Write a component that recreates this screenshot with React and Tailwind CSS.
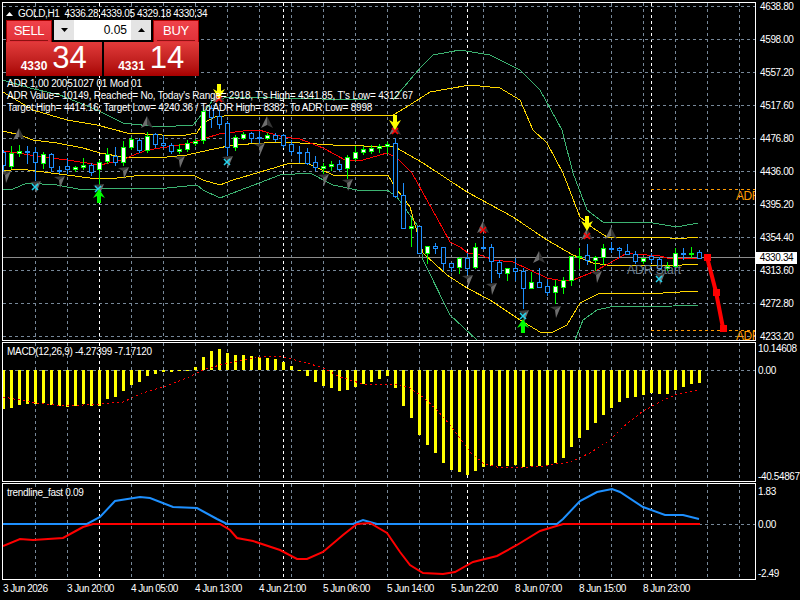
const candles = [
  [150, 152, 165, 170, 0], [146, 153, 166, 168, 1], [145, 151, 153, 156, 1], [146, 151, 152, 163, 0],
  [147, 152, 162, 180, 0], [152, 154, 163, 168, 1], [153, 154, 167, 171, 0], [166, 170, 171, 173, 0],
  [158, 166, 169, 173, 0], [166, 167, 169, 171, 1], [158, 165, 167, 169, 1], [163, 165, 172, 175, 0],
  [160, 162, 169, 185, 1], [148, 154, 161, 163, 1], [147, 156, 162, 165, 0], [141, 147, 162, 165, 1],
  [137, 139, 147, 149, 1], [138, 140, 150, 152, 0], [132, 136, 150, 152, 1], [133, 134, 144, 147, 0],
  [135, 143, 145, 147, 0], [143, 145, 151, 153, 0], [144, 149, 151, 153, 1], [140, 143, 149, 151, 1],
  [139, 141, 143, 145, 1], [108, 111, 140, 143, 1], [105, 108, 117, 127, 0], [110, 116, 124, 128, 0],
  [121, 123, 147, 155, 0], [135, 137, 147, 150, 1], [132, 134, 138, 139, 1], [132, 133, 138, 142, 0],
  [132, 137, 138, 143, 0], [133, 135, 138, 139, 1], [133, 135, 139, 141, 0], [134, 135, 145, 147, 0],
  [140, 144, 151, 154, 0], [146, 152, 153, 162, 0], [148, 152, 163, 164, 0], [156, 162, 167, 170, 0],
  [163, 166, 168, 173, 1], [161, 164, 166, 170, 1], [160, 164, 169, 170, 0], [155, 157, 168, 178, 1],
  [146, 152, 158, 160, 1], [146, 149, 152, 154, 1], [145, 148, 151, 153, 1], [144, 146, 148, 152, 1],
  [142, 144, 146, 153, 1], [138, 143, 196, 197, 0], [183, 195, 228, 228, 0], [217, 226, 228, 246, 1],
  [226, 226, 253, 253, 0], [246, 246, 253, 263, 1], [243, 246, 248, 253, 0], [247, 247, 263, 270, 0],
  [263, 263, 267, 271, 0], [257, 258, 267, 273, 1], [253, 258, 268, 274, 0], [243, 247, 267, 268, 1],
  [236, 247, 248, 249, 0], [244, 247, 261, 282, 0], [260, 262, 273, 277, 0], [268, 268, 273, 280, 1],
  [258, 268, 271, 280, 0], [268, 271, 288, 308, 0], [272, 282, 288, 288, 1], [268, 282, 287, 287, 0],
  [280, 286, 292, 295, 0], [280, 286, 292, 303, 1], [277, 280, 287, 293, 1], [256, 256, 280, 285, 1],
  [248, 256, 257, 268, 1], [244, 255, 260, 264, 0], [256, 257, 260, 270, 1], [244, 248, 257, 264, 1],
  [242, 248, 249, 252, 0], [247, 248, 250, 257, 0], [244, 251, 254, 254, 0], [251, 254, 261, 263, 0],
  [258, 258, 261, 263, 1], [253, 256, 259, 262, 0], [257, 259, 268, 268, 0], [262, 266, 268, 270, 1],
  [248, 253, 266, 266, 1], [248, 253, 254, 259, 0], [247, 253, 254, 257, 1], [250, 252, 258, 258, 0],
];

const greenUp = "3,80 30,88 60,95 97,110 123,123 160,127 193,125 203,113 213,100 230,97 367,100 393,100 420,68 433,55 460,50 490,55 520,70 540,90 562,130 573,173 587,210 603,222 647,222 677,227 698,223";
const yellowUp = "3,92 33,110 67,120 97,125 127,133 180,136 197,133 203,123 215,117 233,115 393,115 405,108 430,92 470,85 500,88 520,100 533,130 547,143 563,173 580,217 593,228 607,237 663,237 677,239 698,237";
const yellowMid = "3,131 20,135 33,140 57,143 83,148 100,153 123,157 167,157 187,155 200,152 233,145 280,142 300,143 333,145 395,147 423,163 467,192 513,217 547,240 573,255 593,263 607,265 647,265 667,266 698,264";
const redMid = "3,151 17,153 50,158 67,160 100,165 123,160 131,156 147,150 187,144 203,139 219,134 243,131 259,130 283,137 300,139 323,148 347,161 363,160 387,153 397,158 412,173 423,193 437,218 450,242 460,247 468,253 480,255 493,260 513,262 530,270 547,278 563,281 573,280 593,272 610,263 627,253 633,254 660,256 667,258 698,258";
const yellowLow = "3,171 20,169 67,175 90,178 117,178 143,175 193,175 203,180 220,185 233,180 277,167 290,163 307,163 333,175 388,175 395,187 410,207 423,253 447,275 467,288 490,300 520,320 540,332 553,332 567,325 580,303 600,293 663,293 698,291";
const greenLow = "3,190 13,189 27,183 57,185 83,190 100,189 117,188 167,188 197,185 203,190 220,198 233,193 280,175 310,173 333,185 357,190 387,190 397,197 417,225 423,260 450,315 477,340 575,340 583,320 597,310 610,307 673,306 698,305";

const chevronsUp = [[19, 135], [147, 123], [267, 123], [219, 98], [395, 130], [483, 228], [539, 258], [587, 235], [611, 234]];
const chevronsDown = [[5, 177], [35, 187], [59, 182], [98, 190], [123, 173], [179, 162], [227, 162], [259, 149], [323, 180], [347, 185], [467, 281], [491, 289], [523, 316], [555, 312], [596, 277], [659, 279]];
const redCross = [[219, 99], [395, 131], [483, 230], [587, 236]];
const cyanCross = [[35, 187], [98, 189], [227, 162], [523, 316], [659, 279]];

const macdBars = [222, 219, 210, 207, 207, 205, 210, 212, 216, 212, 207, 212, 214, 192, 186, 168, 150, 141, 123, 117, 110, 110, 108, 105, 96, 66, 48, 42, 54, 60, 60, 64, 66, 68, 72, 80, 92, 105, 123, 141, 153, 159, 168, 165, 156, 147, 141, 132, 123, 159, 213, 249, 300, 330, 354, 384, 405, 411, 420, 408, 396, 393, 393, 393, 390, 396, 393, 393, 390, 384, 369, 336, 309, 285, 264, 240, 219, 201, 189, 186, 180, 174, 177, 177, 165, 156, 147, 144];
const macdSignal = "3,397 20,400 37,403 57,405 83,405 100,404 123,402 143,393 163,387 187,378 203,370 220,365 243,360 267,356 283,357 307,363 323,368 340,377 363,384 400,385 410,388 423,397 437,410 450,425 470,452 483,463 497,467 517,468 543,466 570,462 590,453 610,440 623,427 643,411 660,402 677,394 700,390";
const trendBlue = "3,524 87,524 100,517 115,501 140,497 150,498 173,507 197,508 217,519 227,524 353,524 363,520 377,524 557,524 563,519 580,501 597,492 612,489 620,492 643,507 665,515 683,515 699,519";
const trendRed = "3,546 20,539 33,540 63,538 83,527 93,524 220,524 230,530 237,538 253,541 280,550 297,559 307,559 323,552 343,535 357,524 370,523 387,533 400,552 410,565 423,573 443,574 455,572 473,562 497,556 517,545 540,531 563,524 700,524";

const mainPrices = ["4638.80", "4598.00", "4557.20", "4517.60", "4476.80", "4436.00", "4395.20", "4354.40", "4313.60", "4272.80", "4233.20"];
const mainGrid = [6, 39, 72, 105, 138, 171, 204, 237, 270, 303, 336];
const timeLabels = ["3 Jun 2026", "3 Jun 20:00", "4 Jun 05:00", "4 Jun 13:00", "4 Jun 21:00", "5 Jun 06:00", "5 Jun 14:00", "5 Jun 22:00", "8 Jun 07:00", "8 Jun 15:00", "8 Jun 23:00"];
const gridX = Array.from({ length: 23 }, (_, i) => 35 + i * 32);
const separators = [99, 283, 467, 651];

const VGrid = ({ top, bottom }) => (
  <g shapeRendering="crispEdges">
    {gridX.filter((x) => !separators.includes(x)).map((x) => (
      <line key={x} x1={x + 0.5} x2={x + 0.5} y1={top} y2={bottom} stroke="#778899" strokeDasharray="3 3" />
    ))}
    {separators.map((x) => (
      <line key={x} x1={x + 0.5} x2={x + 0.5} y1={top} y2={bottom} stroke="#ffffff" strokeDasharray="3 3" />
    ))}
  </g>
);

const HGrid = ({ y }) => (
  <line x1="3" x2="755" y1={y + 0.5} y2={y + 0.5} stroke="#778899" strokeDasharray="3 3" shapeRendering="crispEdges" />
);

const Candle = ({ x, c }) => {
  const [high, top, bottom, low, bull] = c;
  const color = bull ? "#00ff00" : "#1e90ff";
  return (
    <g shapeRendering="crispEdges">
      <rect x={x} y={high} width="1" height={low - high + 1} fill={color} />
      <rect x={x - 2} y={top} width="5" height={bottom - top + 1} fill={color} />
      {bottom - top > 1 && (
        <rect x={x - 1} y={top + 1} width="3" height={bottom - top - 1} fill={bull ? "#ffffff" : "#000000"} />
      )}
    </g>
  );
};

const ChevronUp = ({ x, y }) => (
  <g>
    <polygon points={`${x},${y - 7} ${x - 6},${y + 5} ${x},${y + 2}`} fill="#6e6e6e" />
    <polygon points={`${x},${y - 7} ${x + 6},${y + 5} ${x},${y + 2}`} fill="#363636" />
  </g>
);

const ChevronDown = ({ x, y }) => (
  <g>
    <polygon points={`${x + 6},${y - 6} ${x - 5},${y - 5} ${x},${y - 2}`} fill="#3c3c3c" />
    <polygon points={`${x + 6},${y - 6} ${x + 1},${y + 6} ${x},${y - 2}`} fill="#6e6e6e" />
  </g>
);

const Cross = ({ x, y, color }) => (
  <path d={`M${x - 3} ${y - 3}L${x + 3} ${y + 3}M${x + 3} ${y - 3}L${x - 3} ${y + 3}`} stroke={color} strokeWidth="1.5" fill="none" />
);

const ArrowDown = ({ x, y }) => (
  <polygon
    points={`${x - 2},${y - 8} ${x + 2},${y - 8} ${x + 2},${y - 1} ${x + 6},${y - 3} ${x},${y + 7} ${x - 6},${y - 3} ${x - 2},${y - 1}`}
    fill="#ffff00"
  />
);

const ArrowUp = ({ x, y }) => (
  <polygon
    points={`${x - 2},${y + 8} ${x + 2},${y + 8} ${x + 2},${y + 1} ${x + 6},${y + 3} ${x},${y - 6} ${x - 6},${y + 3} ${x - 2},${y + 1}`}
    fill="#00ff00"
  />
);

const Triangle = ({ up }) => (
  <svg width="7" height="4" viewBox="0 0 7 4">
    <polygon points={up ? "3.5,0 7,4 0,4" : "0,0 7,0 3.5,4"} fill="#000000" />
  </svg>
);

const MainChart = () => (
  <svg className="block" width="752" height="337" viewBox="3 3 752 337">
    <VGrid top={3} bottom={340} />
    <g shapeRendering="crispEdges">
      {mainGrid.map((y) => <HGrid key={y} y={y} />)}
    </g>
    <line x1="3" x2="755" y1="257.5" y2="257.5" stroke="#8c8c8c" shapeRendering="crispEdges" />
    <g fill="none" shapeRendering="crispEdges">
      <polyline points={greenUp} stroke="#3cb371" />
      <polyline points={greenLow} stroke="#3cb371" />
      <polyline points={yellowUp} stroke="#ffd700" />
      <polyline points={yellowMid} stroke="#ffd700" />
      <polyline points={yellowLow} stroke="#ffd700" />
      <polyline points={redMid} stroke="#ff0000" />
    </g>
    {candles.map((c, i) => <Candle key={i} x={3 + i * 8} c={c} />)}
    {chevronsUp.map(([x, y]) => <ChevronUp key={`u${x}`} x={x} y={y} />)}
    {chevronsDown.map(([x, y]) => <ChevronDown key={`d${x}`} x={x} y={y} />)}
    {redCross.map(([x, y]) => <Cross key={`r${x}`} x={x} y={y} color="#ff0000" />)}
    {cyanCross.map(([x, y]) => <Cross key={`c${x}`} x={x} y={y} color="#22d3ee" />)}
    <ArrowDown x={219} y={92} />
    <ArrowDown x={395} y={123} />
    <ArrowDown x={587} y={224} />
    <ArrowUp x={99} y={195} />
    <ArrowUp x={523} y={325} />
    <g shapeRendering="crispEdges" stroke="#ff9900" strokeDasharray="3 3">
      <line x1="651" x2="755" y1="189.5" y2="189.5" />
      <line x1="651" x2="755" y1="330.5" y2="330.5" />
    </g>
    <polyline points="707,257 716,292 723,328" fill="none" stroke="#ff0000" strokeWidth="4" />
    <g fill="#ff0000" shapeRendering="crispEdges">
      <rect x="704" y="254" width="7" height="7" />
      <rect x="713" y="289" width="7" height="7" />
      <rect x="720" y="325" width="7" height="7" />
    </g>
  </svg>
);

const MacdChart = () => (
  <svg className="block" width="752" height="138" viewBox="3 343 752 138">
    <VGrid top={343} bottom={481} />
    <HGrid y={370} />
    <g fill="#ffff00" shapeRendering="crispEdges">
      {macdBars.map((z, i) => {
        const y = 335 + z / 3;
        const top = Math.min(y, 370);
        return <rect key={i} x={2 + i * 8} y={top} width="3" height={Math.max(Math.abs(y - 370), 1)} />;
      })}
    </g>
    <polyline points={macdSignal} fill="none" stroke="#ff0000" strokeDasharray="2 3" shapeRendering="crispEdges" />
  </svg>
);

const TrendChart = () => (
  <svg className="block" width="752" height="95" viewBox="3 484 752 95">
    <VGrid top={484} bottom={579} />
    <HGrid y={524} />
    <polyline points={trendBlue} fill="none" stroke="#1e90ff" strokeWidth="2" />
    <polyline points={trendRed} fill="none" stroke="#ff0000" strokeWidth="2" />
  </svg>
);

const TradePanel = () => (
  <div className="absolute left-[3px] top-[17px] w-[193px] flex flex-col text-white">
    <div className="flex h-[22px] bg-black">
      <div className="w-[46px] bg-linear-to-b from-[#f0424a] to-[#e03038] border border-b-0 border-[#a80000] px-[3px]">
        <div className="h-[20px] border-b border-[#8c1010] flex items-center justify-center text-[13px] tracking-[-0.3px]">SELL</div>
      </div>
      <div className="flex-1 flex mx-[2px] h-[20px] text-black">
        <div className="w-[20px] bg-[#e4e4e4] flex items-center justify-center"><Triangle /></div>
        <div className="flex-1 bg-white flex items-center justify-end pr-[4px] text-[12px]">0.05</div>
        <div className="w-[20px] bg-[#e4e4e4] flex items-center justify-center"><Triangle up /></div>
      </div>
      <div className="w-[46px] bg-linear-to-b from-[#f0424a] to-[#e03038] border border-b-0 border-[#a80000] px-[3px]">
        <div className="h-[20px] border-b border-[#8c1010] flex items-center justify-center text-[13px] tracking-[-0.3px]">BUY</div>
      </div>
    </div>
    <div className="flex gap-[2px] h-[34px]">
      <div className="flex-1 bg-linear-to-b from-[#e23a3a] to-[#a80000] flex items-end justify-center gap-[5px] pb-[3px]">
        <span className="font-bold text-[12px] leading-[14px]">4330</span>
        <span className="text-[31px] leading-[30px]">34</span>
      </div>
      <div className="flex-1 bg-linear-to-b from-[#e23a3a] to-[#a80000] flex items-end justify-center gap-[5px] pb-[3px]">
        <span className="font-bold text-[12px] leading-[14px]">4331</span>
        <span className="text-[31px] leading-[30px]">14</span>
      </div>
    </div>
  </div>
);

export default function App() {
  return (
    <div className="w-[800px] h-[600px] bg-black text-white flex flex-col pt-[2px] pl-[2px] overflow-hidden text-[10px] leading-[12px] font-['Liberation_Sans',Arial,sans-serif]">
      <div className="flex h-[339px] mb-[1px]">
        <div className="relative w-[754px] border border-white overflow-hidden">
          <MainChart />
          <div className="absolute left-[3px] top-[5px] flex items-center gap-[5px]">
            <svg width="7" height="4" viewBox="0 0 7 4"><polygon points="3.5,0 7,4 0,4" fill="#ffffff" /></svg>
            <span className="whitespace-pre tracking-[-0.33px]">GOLD,H1  4336.28 4339.05 4329.18 4330.34</span>
          </div>
          <TradePanel />
          <div className="absolute left-[4px] top-[75px] flex flex-col whitespace-pre tracking-[-0.22px]">
            <span>ADR 1,00 20051027 01 Mod 01</span>
            <span>ADR Value= 10149, Reached= No, Today's Range= 2918, T's High= 4341.85, T's Low= 4312.67</span>
            <span>Target High= 4414.16, Target Low= 4240.36 / To ADR High= 8382, To ADR Low= 8998</span>
          </div>
          <span className="absolute left-[624px] top-[261px] text-[12px] text-[#708090]">ADR Start</span>
          <span className="absolute left-[733px] top-[187px] text-[12px] tracking-[-0.5px] text-[#ff9900]">ADR</span>
          <span className="absolute left-[733px] top-[327px] text-[12px] tracking-[-0.5px] text-[#ff9900]">ADR</span>
        </div>
        <div className="relative flex-1 pl-[4px] flex flex-col tracking-[-0.37px]">
          <div className="shrink-0 -mt-[12px]" />
          {mainPrices.map((p) => (
            <div key={p} className="shrink-0 h-[33px] flex items-center">{p}</div>
          ))}
          <div className="absolute left-0 top-[250px] w-[41px] h-[12px] bg-white text-black flex items-center justify-center">4330.34</div>
        </div>
      </div>

      <div className="flex h-[140px] mb-[1px]">
        <div className="relative w-[754px] border border-white overflow-hidden">
          <MacdChart />
          <span className="absolute left-[4px] top-[3px] tracking-[-0.3px]">MACD(12,26,9) -4.27399 -7.17120</span>
        </div>
        <div className="flex-1 pl-[2px] flex flex-col tracking-[-0.37px]">
          <span className="mt-[1px]">10.14608</span>
          <span className="mt-[10px]">0.00</span>
          <span className="mt-[94px]">-40.54867</span>
        </div>
      </div>

      <div className="flex h-[97px]">
        <div className="relative w-[754px] border border-white overflow-hidden">
          <TrendChart />
          <span className="absolute left-[4px] top-[3px] tracking-[-0.3px]">trendline_fast 0.09</span>
        </div>
        <div className="flex-1 pl-[2px] flex flex-col tracking-[-0.37px]">
          <span className="mt-[3px]">1.83</span>
          <span className="mt-[21px]">0.00</span>
          <span className="mt-[37px]">-2.49</span>
        </div>
      </div>

      <div className="flex pl-[1px] pt-[3px] h-[20px] tracking-[-0.5px]">
        {timeLabels.map((t) => (
          <span key={t} className="w-[64px] whitespace-pre">{t}</span>
        ))}
      </div>
    </div>
  );
}
